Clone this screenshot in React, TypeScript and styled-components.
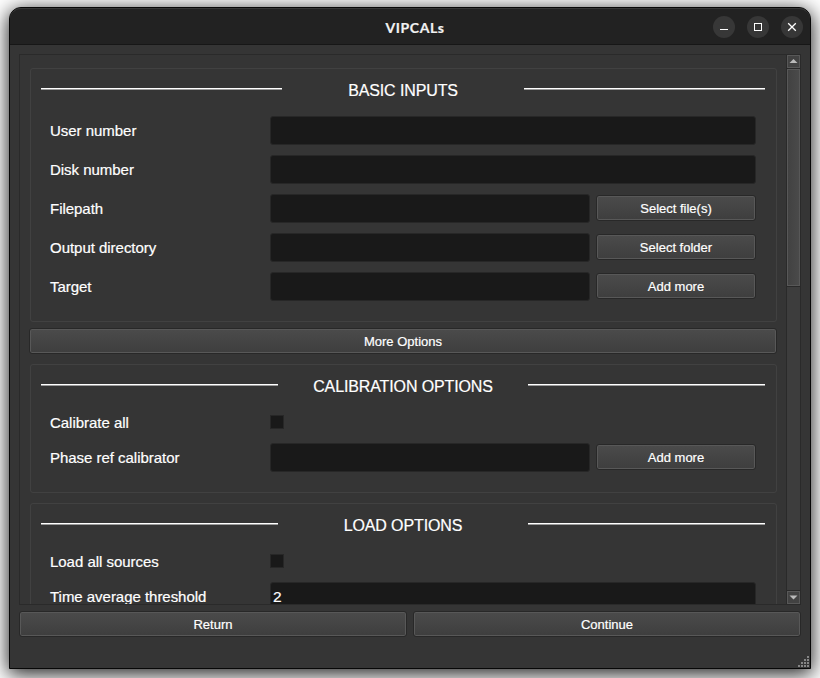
import React from "react";
import styled, { createGlobalStyle } from "styled-components";

const Global = createGlobalStyle`
  * { box-sizing: border-box; }
  html, body { margin: 0; height: 100%; overflow: hidden; background: #fff; }
  body { font-family: "Liberation Sans", Arial, sans-serif; color: #fff; }
`;

const Desktop = styled.div`
  width: 820px;
  height: 678px;
  padding: 7px 9px 9px;
  overflow: hidden;
`;

const Window = styled.main`
  width: 802px;
  height: 662px;
  display: flex;
  flex-direction: column;
  border: 1px solid #070707;
  border-radius: 12px 12px 0 0;
  background: #353535;
  box-shadow: 0 4px 20px 1px rgba(0, 0, 0, 0.88);
`;

const TitleBar = styled.header`
  flex: none;
  height: 37px;
  display: grid;
  grid-template-columns: 1fr auto 1fr;
  align-items: center;
  padding: 0 7px 0 17px;
  background: #222;
  border-top: 1px solid #363636;
  border-bottom: 1px solid #171717;
  border-radius: 11px 11px 0 0;
`;

const WindowTitle = styled.h1`
  grid-column: 2;
  margin: 3px 0 0;
  font: 700 14px/20px Lato, "Open Sans", sans-serif;
  letter-spacing: 0.6px;
  color: #f2f2f2;
  -webkit-text-stroke: 0.2px #f2f2f2;
`;

const Controls = styled.div`
  justify-self: end;
  display: flex;
  gap: 12px;
`;

const Control = styled.button`
  width: 22px;
  height: 22px;
  padding: 0;
  border: 0;
  border-radius: 50%;
  background: #373737;
  svg { display: block; }
`;

const Body = styled.div`
  flex: 1;
  min-height: 0;
  display: flex;
  flex-direction: column;
  padding: 9px 9px 0;
`;

const ScrollFrame = styled.section`
  height: 551px;
  flex: none;
  display: flex;
  border: 1px solid #2a2a2a;
`;

const Viewport = styled.div`
  flex: 1;
  min-width: 0;
  overflow: hidden;
  padding: 13px 9px 0 10px;
`;

const Group = styled.fieldset`
  margin: 0;
  min-width: 0;
  padding: 0 20px 20px 19px;
  border: 1px solid #414141;
  border-radius: 3px;
`;

const GroupHeader = styled.div<{ $line: number }>`
  display: grid;
  grid-template-columns: ${(p) => p.$line}px 1fr ${(p) => p.$line}px;
  align-items: center;
  height: 42px;
  margin: 0 -9px 5px -9px;
`;

const GroupTitle = styled.h2`
  margin: 2px 0 0;
  text-align: center;
  font-size: 16px;
  font-weight: 400;
  line-height: 20px;
  letter-spacing: -0.12px;
  -webkit-text-stroke: 0.2px #fff;
`;

const Rule = styled.div`
  height: 2px;
  margin-top: -2px;
  border-top: 1px solid #fff;
  border-bottom: 1px solid #9b9b9b;
`;

const Rows = styled.div`
  display: flex;
  flex-direction: column;
  gap: 10px;
`;

const Row = styled.div<{ $short?: boolean }>`
  height: ${(p) => (p.$short ? 21 : 29)}px;
  display: flex;
  align-items: center;
`;

const Label = styled.label`
  flex: none;
  width: 220px;
  font-size: 15px;
  line-height: 20px;
  letter-spacing: -0.03px;
  white-space: nowrap;
  -webkit-text-stroke: 0.2px #fff;
`;

const Field = styled.input`
  flex: 1;
  min-width: 0;
  height: 29px;
  padding: 0 2px;
  border: 1px solid #272727;
  border-radius: 3px;
  outline: 0;
  background: #191919;
  color: #fff;
  font: 15.5px/20px "Liberation Sans", Arial, sans-serif;
  -webkit-text-stroke: 0.2px #fff;
`;

const Check = styled.input`
  appearance: none;
  width: 14px;
  height: 14px;
  margin: 0 0 1px;
  border: 1px solid #272727;
  background: #191919;
`;

const PushButton = styled.button<{ $width?: string; $margin?: string }>`
  flex: none;
  width: ${(p) => p.$width ?? "100%"};
  height: 26px;
  margin: ${(p) => p.$margin ?? "0"};
  padding: 2px 0 0;
  border: 1px solid #282828;
  border-radius: 3px;
  background: linear-gradient(#4b4b4b, #3e3e3e);
  box-shadow: inset 0 0 0 1px #585858;
  color: #fff;
  font: 13px/16px "Liberation Sans", Arial, sans-serif;
  -webkit-text-stroke: 0.2px #fff;
`;

const ScrollBar = styled.div`
  flex: none;
  width: 14px;
  display: flex;
  flex-direction: column;
  border-left: 1px solid #2a2a2a;
  background: #3d3d3d;
`;

const Arrow = styled.div`
  flex: none;
  height: 13px;
  width: 13px;
  border: 1px solid #585858;
  background: #424242;
  svg { display: block; }
`;

const Thumb = styled.div`
  height: 217px;
  width: 13px;
  border: 1px solid #585858;
  background: linear-gradient(90deg, #424242, #4a4a4a);
  box-shadow: 0 -1px #292929, 0 1px #292929;
  margin-top: 1px;
`;

const Track = styled.div`
  flex: 1;
  border-bottom: 1px solid #292929;
`;

const Footer = styled.footer`
  display: flex;
  gap: 6px;
  margin-top: 6px;
`;

const GripRow = styled.div`
  flex: 1;
  display: flex;
  justify-content: flex-end;
  align-items: flex-end;
  margin-right: -8px;
  padding-bottom: 1px;
  svg { display: block; }
`;

const GroupGap = styled.div`
  height: 10px;
`;

type RowSpec = { label: string; kind?: "check"; action?: string; value?: string };
type GroupSpec = { title: string; line: number; rows: RowSpec[] };

const basic: GroupSpec = {
  title: "BASIC INPUTS",
  line: 241,
  rows: [
    { label: "User number" },
    { label: "Disk number" },
    { label: "Filepath", action: "Select file(s)" },
    { label: "Output directory", action: "Select folder" },
    { label: "Target", action: "Add more" },
  ],
};

const calibration: GroupSpec = {
  title: "CALIBRATION OPTIONS",
  line: 237,
  rows: [
    { label: "Calibrate all", kind: "check" },
    { label: "Phase ref calibrator", action: "Add more" },
  ],
};

const loading: GroupSpec = {
  title: "LOAD OPTIONS",
  line: 237,
  rows: [
    { label: "Load all sources", kind: "check" },
    { label: "Time average threshold", value: "2" },
  ],
};

function FormGroup({ title, line, rows }: GroupSpec) {
  return (
    <Group>
      <GroupHeader $line={line}>
        <Rule />
        <GroupTitle>{title}</GroupTitle>
        <Rule />
      </GroupHeader>
      <Rows>
        {rows.map((r) => (
          <Row key={r.label} $short={r.kind === "check"}>
            <Label>{r.label}</Label>
            {r.kind === "check" ? (
              <Check type="checkbox" aria-label={r.label} />
            ) : (
              <Field defaultValue={r.value} aria-label={r.label} />
            )}
            {r.action && (
              <PushButton $width="160px" $margin="0 0 1px 6px">
                {r.action}
              </PushButton>
            )}
          </Row>
        ))}
      </Rows>
    </Group>
  );
}

const gripDots = [
  [9, 0],
  [6, 3], [9, 3],
  [3, 6], [6, 6], [9, 6],
  [0, 9], [3, 9], [6, 9], [9, 9],
];

export default function App() {
  return (
    <>
      <Global />
      <Desktop>
        <Window>
          <TitleBar>
            <WindowTitle>VIPCALs</WindowTitle>
            <Controls>
              <Control aria-label="Minimize">
                <svg width="22" height="22">
                  <rect x="7" y="13" width="8" height="1" fill="#fff" />
                </svg>
              </Control>
              <Control aria-label="Maximize">
                <svg width="22" height="22">
                  <rect x="7.5" y="7.5" width="7" height="7" fill="none" stroke="#fff" />
                </svg>
              </Control>
              <Control aria-label="Close">
                <svg width="22" height="22">
                  <path d="M7.2 7.2l7.6 7.6M14.8 7.2l-7.6 7.6" stroke="#fff" strokeWidth="1.3" />
                </svg>
              </Control>
            </Controls>
          </TitleBar>
          <Body>
            <ScrollFrame>
              <Viewport>
                <FormGroup {...basic} />
                <PushButton $width="calc(100% + 1px)" $margin="6px 0 10px -1px">
                  More Options
                </PushButton>
                <FormGroup {...calibration} />
                <GroupGap />
                <FormGroup {...loading} />
              </Viewport>
              <ScrollBar>
                <Arrow>
                  <svg width="11" height="11">
                    <path d="M5.5 3L9.5 7H1.5Z" fill="#bababa" />
                  </svg>
                </Arrow>
                <Thumb />
                <Track />
                <Arrow>
                  <svg width="11" height="11">
                    <path d="M5.5 7.5L9.5 3.5H1.5Z" fill="#bababa" />
                  </svg>
                </Arrow>
              </ScrollBar>
            </ScrollFrame>
            <Footer>
              <PushButton $width="388px">Return</PushButton>
              <PushButton $width="388px">Continue</PushButton>
            </Footer>
            <GripRow>
              <svg width="11" height="11" shapeRendering="crispEdges">
                {gripDots.map(([x, y]) => (
                  <rect key={`${x}-${y}`} x={x} y={y} width="2" height="2" fill="#858585" />
                ))}
              </svg>
            </GripRow>
          </Body>
        </Window>
      </Desktop>
    </>
  );
}
